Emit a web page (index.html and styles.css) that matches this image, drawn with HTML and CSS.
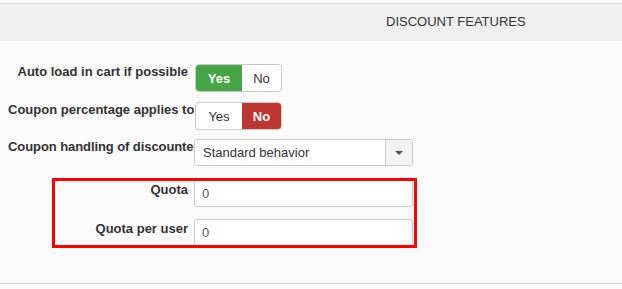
FILE: index.html
```html
<!DOCTYPE html>
<html>
<head>
<meta charset="utf-8">
<link rel="stylesheet" href="styles.css">
</head>
<body>
<div class="panel">
  <div class="panel-head">DISCOUNT FEATURES</div>
  <div class="panel-body">
    <div class="row">
      <div class="label">Auto load in cart if possible</div>
      <div class="toggle">
        <span class="opt opt-yes on-green">Yes</span>
        <span class="opt opt-no">No</span>
      </div>
    </div>
    <div class="row">
      <div class="label">Coupon percentage applies to</div>
      <div class="toggle">
        <span class="opt opt-yes">Yes</span>
        <span class="opt opt-no on-red">No</span>
      </div>
    </div>
    <div class="row row-select">
      <div class="label">Coupon handling of discounte</div>
      <div class="select">
        <span class="select-text">Standard behavior</span>
        <span class="select-btn"><span class="caret"></span></span>
      </div>
    </div>
    <div class="quota-group">
      <div class="row row-quota">
        <div class="label">Quota</div>
        <input class="field" type="text" value="0" readonly>
      </div>
      <div class="row row-quota">
        <div class="label">Quota per user</div>
        <input class="field" type="text" value="0" readonly>
      </div>
    </div>
  </div>
</div>
</body>
</html>
```
FILE: styles.css
```css
html, body {
  margin: 0;
  padding: 0;
  background: #fafafa;
  font-family: "Liberation Sans", Arial, sans-serif;
  color: #333;
}

.panel {
  margin-top: 3px;
  border-top: 1px solid #dcdcdc;
  border-bottom: 1px solid #d0d0d0;
}

.panel-head {
  height: 37px;
  box-sizing: border-box;
  background: #efefef;
  font-size: 13px;
  line-height: 16px;
  padding: 10px 0 0 386px;
  color: #333;
}

.panel-body {
  padding: 23px 0 37px 8px;
  display: flex;
  flex-direction: column;
  gap: 10px;
}

.row {
  display: flex;
  align-items: flex-start;
}

.label {
  width: 180px;
  padding-right: 6px;
  flex: none;
  overflow: hidden;
  white-space: nowrap;
  text-align: right;
  font-size: 13px;
  font-weight: bold;
  line-height: 14px;
  padding-top: 1px;
  color: #333;
}

.row-select .label {
  width: auto;
  min-width: 186px;
  padding-right: 0;
  overflow: visible;
  text-align: left;
  letter-spacing: -0.08px;
}

.toggle {
  display: flex;
  height: 28px;
  box-sizing: border-box;
  margin-left: 1px;
  border: 1px solid #c8c8c8;
  border-radius: 4px;
  overflow: hidden;
  background: #fff;
  font-size: 13px;
}

.opt {
  display: flex;
  align-items: center;
  justify-content: center;
  color: #333;
}

.opt-yes { width: 46px; }
.opt-no { width: 39px; }

.on-green {
  background: #46a546;
  color: #fff;
  font-weight: bold;
}

.on-red {
  background: #bd362f;
  color: #fff;
  font-weight: bold;
}

.row-select { margin-top: -1px; }

.select {
  display: flex;
  width: 219px;
  height: 27px;
  box-sizing: border-box;
  border: 1px solid #ccc;
  border-radius: 3px;
  background: #fff;
  overflow: hidden;
}

.select-text {
  flex: 1;
  padding-left: 8px;
  font-size: 13px;
  line-height: 25px;
  color: #333;
}

.select-btn {
  width: 26px;
  border-left: 1px solid #ccc;
  background: #f2f2f2;
  display: flex;
  align-items: center;
  justify-content: center;
}

.caret {
  width: 0;
  height: 0;
  border-left: 4px solid transparent;
  border-right: 4px solid transparent;
  border-top: 4px solid #555;
}

.quota-group {
  position: relative;
  display: flex;
  flex-direction: column;
  gap: 12px;
  margin-top: 4px;
}

.quota-group::after {
  content: "";
  position: absolute;
  left: 44px;
  top: -2px;
  width: 365px;
  height: 70px;
  box-sizing: border-box;
  border: 3px solid #ff0000;
  pointer-events: none;
}

.row-quota .label { padding-top: 3px; }

.field {
  width: 219px;
  height: 27px;
  box-sizing: border-box;
  margin: 0;
  border: 1px solid #ccc;
  border-radius: 3px;
  background: #fff;
  padding: 0 0 0 7px;
  font-family: "Liberation Sans", Arial, sans-serif;
  font-size: 13px;
  color: #555;
  outline: none;
}
```
